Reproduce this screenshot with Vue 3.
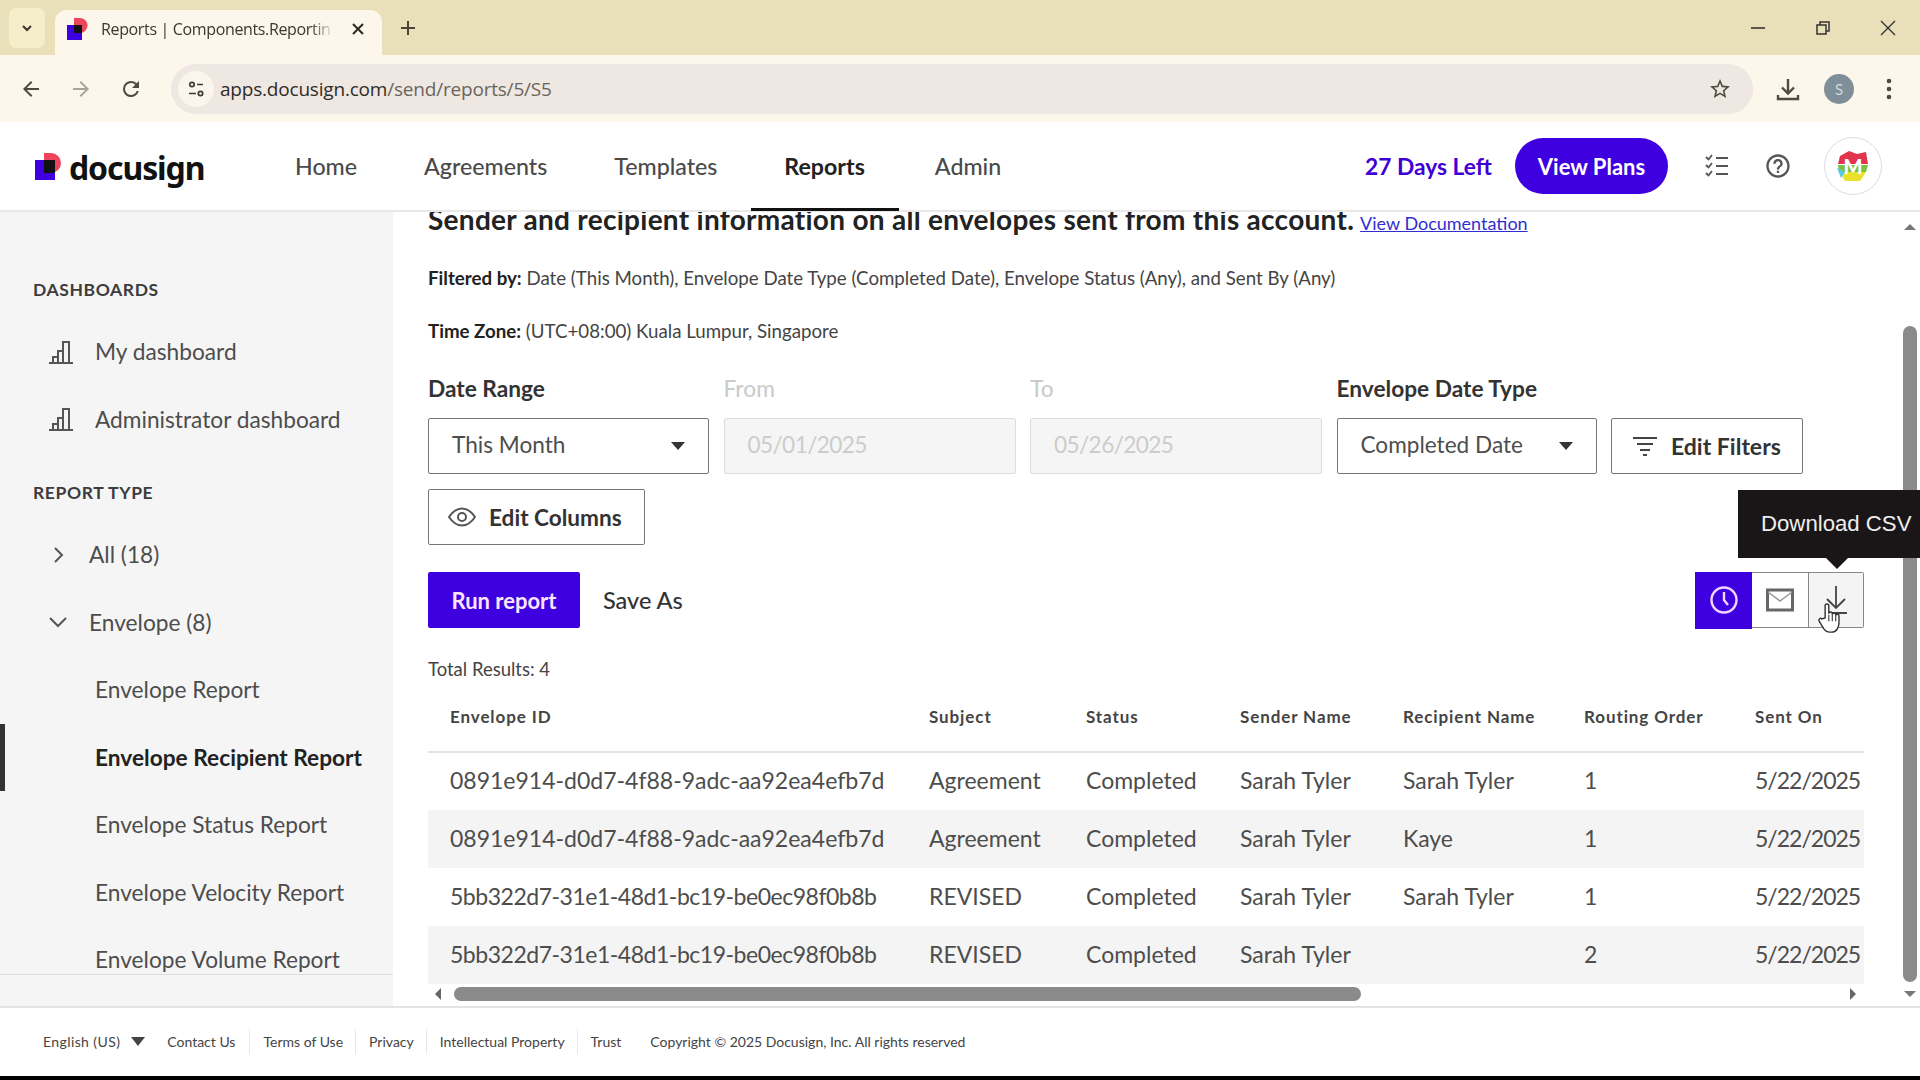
<script setup>
import { ref } from 'vue'

const navItems = ['Home', 'Agreements', 'Templates', 'Reports', 'Admin']
const activeNav = ref('Reports')

const envelopeReports = [
  'Envelope Report',
  'Envelope Recipient Report',
  'Envelope Status Report',
  'Envelope Velocity Report',
  'Envelope Volume Report'
]

const columns = ['Envelope ID', 'Subject', 'Status', 'Sender Name', 'Recipient Name', 'Routing Order', 'Sent On']

const rows = [
  ['0891e914-d0d7-4f88-9adc-aa92ea4efb7d', 'Agreement', 'Completed', 'Sarah Tyler', 'Sarah Tyler', '1', '5/22/2025'],
  ['0891e914-d0d7-4f88-9adc-aa92ea4efb7d', 'Agreement', 'Completed', 'Sarah Tyler', 'Kaye', '1', '5/22/2025'],
  ['5bb322d7-31e1-48d1-bc19-be0ec98f0b8b', 'REVISED', 'Completed', 'Sarah Tyler', 'Sarah Tyler', '1', '5/22/2025'],
  ['5bb322d7-31e1-48d1-bc19-be0ec98f0b8b', 'REVISED', 'Completed', 'Sarah Tyler', '', '2', '5/22/2025']
]

const footerLinks = ['Contact Us', 'Terms of Use', 'Privacy', 'Intellectual Property', 'Trust']
</script>

<template>
  <div class="screen">
    <div class="tabstrip">
      <div class="tab-search">
        <svg width="14" height="14" viewBox="0 0 14 14"><path d="M3 5l4 4 4-4" fill="none" stroke="#3a342a" stroke-width="2"/></svg>
      </div>
      <div class="tab">
        <svg class="favicon" width="22" height="24" viewBox="0 0 22 24">
          <path d="M8 1h6a7 7 0 0 1 0 15H8z" fill="#f0445c"/>
          <rect x="1" y="8" width="15" height="15" fill="#3f00e0"/>
          <path d="M8 8h8v8H8z" fill="#111"/>
        </svg>
        <span class="tab-title">Reports | Components.Reportin</span>
        <svg width="14" height="14" viewBox="0 0 14 14"><path d="M2 2l10 10M12 2L2 12" stroke="#2e2a22" stroke-width="2"/></svg>
      </div>
      <svg class="new-tab" width="18" height="18" viewBox="0 0 18 18"><path d="M9 2v14M2 9h14" stroke="#4a4436" stroke-width="2"/></svg>
      <div class="window-ctrls">
        <svg width="16" height="16" viewBox="0 0 16 16"><path d="M1 8h14" stroke="#333" stroke-width="1.6"/></svg>
        <svg width="16" height="16" viewBox="0 0 16 16"><path d="M2 5h9v9H2zM5 5V2h9v9h-3" fill="none" stroke="#333" stroke-width="1.5"/></svg>
        <svg width="16" height="16" viewBox="0 0 16 16"><path d="M1 1l14 14M15 1L1 15" stroke="#333" stroke-width="1.4"/></svg>
      </div>
    </div>

    <div class="toolbar">
      <svg width="24" height="24" viewBox="0 0 24 24"><path d="M20 11H7.8l5.6-5.6L12 4l-8 8 8 8 1.4-1.4L7.8 13H20z" fill="#4f4a40"/></svg>
      <svg class="fwd" width="24" height="24" viewBox="0 0 24 24"><path d="M4 11h12.2l-5.6-5.6L12 4l8 8-8 8-1.4-1.4 5.6-5.6H4z" fill="#a8a499"/></svg>
      <svg class="reload" width="24" height="24" viewBox="0 0 24 24"><path d="M17.65 6.35A7.96 7.96 0 0 0 12 4a8 8 0 1 0 7.73 10h-2.08A6 6 0 1 1 12 6c1.66 0 3.14.69 4.22 1.78L13 11h7V4z" fill="#4f4a40"/></svg>
      <div class="omnibox">
        <span class="site-info">
          <svg width="20" height="20" viewBox="0 0 20 20" fill="none" stroke="#3f3b33" stroke-width="1.7">
            <circle cx="6" cy="5.5" r="2.2"/><path d="M11 5.5h6M3 14.5h7"/><circle cx="14.5" cy="14.5" r="2.2"/>
          </svg>
        </span>
        <span class="url"><span class="url-host">apps.docusign.com</span>/send/reports/5/S5</span>
        <svg class="star" width="24" height="24" viewBox="0 0 24 24"><path d="M22 9.24l-7.19-.62L12 2 9.19 8.63 2 9.24l5.46 4.73L5.82 21 12 17.27 18.18 21l-1.63-7.03L22 9.24zM12 15.4l-3.76 2.27 1-4.28-3.32-2.88 4.38-.38L12 6.1l1.71 4.04 4.38.38-3.32 2.88 1 4.28L12 15.4z" fill="#4f4a40"/></svg>
      </div>
      <svg class="dl" width="26" height="26" viewBox="0 0 26 26" fill="none" stroke="#4f4a40" stroke-width="2.4"><path d="M13 3v14M7 11.5l6 6 6-6M3 19v4h20v-4"/></svg>
      <span class="profile">S</span>
      <svg class="dots" width="6" height="24" viewBox="0 0 6 24"><circle cx="3" cy="4" r="2.3" fill="#4f4a40"/><circle cx="3" cy="12" r="2.3" fill="#4f4a40"/><circle cx="3" cy="20" r="2.3" fill="#4f4a40"/></svg>
    </div>

    <header class="app-header">
      <div class="logo">
        <svg width="26" height="27" viewBox="0 0 26 27">
          <path d="M9 0h7a10 10 0 0 1 0 20H9z" fill="#f0445c"/>
          <rect x="0" y="7" width="20" height="20" fill="#3f00e0"/>
          <rect x="9" y="7" width="11" height="13" fill="#111"/>
        </svg>
        <span class="logo-text">docusign</span>
      </div>
      <nav class="nav">
        <a v-for="item in navItems" :key="item" class="nav-item" :class="{ active: item === activeNav }">{{ item }}</a>
      </nav>
      <div class="header-right">
        <span class="days-left">27 Days Left</span>
        <button class="btn-plans">View Plans</button>
        <svg class="hd-icon checklist" width="26" height="26" viewBox="0 0 26 26" fill="none" stroke="#555" stroke-width="1.8">
          <path d="M2 4l2.500 2.500L8 2M2 12l2.500 2.500L8 10M2 20l2.500 2.500L8 18M12 5h12M12 13h12M12 21h12"/>
        </svg>
        <svg class="hd-icon help" width="28" height="28" viewBox="0 0 24 24"><path d="M11 18h2v-2h-2v2zm1-16C6.480 2 2 6.480 2 12s4.480 10 10 10 10-4.480 10-10S17.520 2 12 2zm0 18c-4.410 0-8-3.590-8-8s3.590-8 8-8 8 3.590 8 8-3.590 8-8 8zm0-14c-2.210 0-4 1.790-4 4h2c0-1.100.9-2 2-2s2 .9 2 2c0 2-3 1.750-3 5h2c0-2.250 3-2.500 3-5 0-2.210-1.790-4-4-4z" fill="#555"/></svg>
        <div class="avatar">
          <svg width="36" height="36" viewBox="0 0 36 36">
            <path d="M5 8l9-5 8 3 9-2 2 12-30 0z" fill="#e0354c"/>
            <path d="M3 17h30l-2 7H4z" fill="#7bc043"/>
            <path d="M5 24h26l-6 9H10z" fill="#e8e22c"/>
            <path d="M2 20l8 4-4 6z" fill="#5cc8e8"/>
          </svg>
          <span class="avatar-m">M</span>
        </div>
      </div>
    </header>

    <div class="body">
      <aside class="sidebar">
        <div class="side-scroll">
          <h4 class="side-heading first">DASHBOARDS</h4>
          <div v-for="d in ['My dashboard', 'Administrator dashboard']" :key="d" class="side-item dash">
            <svg width="26" height="26" viewBox="0 0 26 26" fill="none" stroke="#555" stroke-width="2">
              <path d="M1 24h24M5 24v-6h5v6M10 24V12h5v12M15 24V3h6v21"/>
            </svg>
            <span>{{ d }}</span>
          </div>
          <h4 class="side-heading">REPORT TYPE</h4>
          <div class="side-item tree">
            <svg width="18" height="18" viewBox="0 0 18 18" fill="none" stroke="#555" stroke-width="2"><path d="M6 2l7 7-7 7"/></svg>
            <span>All (18)</span>
          </div>
          <div class="side-item tree">
            <svg width="18" height="18" viewBox="0 0 18 18" fill="none" stroke="#555" stroke-width="2"><path d="M1 5l8 8 8-8"/></svg>
            <span>Envelope (8)</span>
          </div>
          <div
            v-for="r in envelopeReports"
            :key="r"
            class="side-item sub"
            :class="{ current: r === 'Envelope Recipient Report' }"
          >{{ r }}</div>
        </div>
      </aside>

      <main class="main">
        <div class="content">
          <div class="title-line">
            <span class="report-title">Sender and recipient information on all envelopes sent from this account.</span>
            <a class="doc-link">View Documentation</a>
          </div>
          <p class="meta filtered"><b>Filtered by:</b> Date (This Month), Envelope Date Type (Completed Date), Envelope Status (Any), and Sent By (Any)</p>
          <p class="meta zone"><b>Time Zone:</b> (UTC+08:00) Kuala Lumpur, Singapore</p>

          <div class="filters">
            <div class="field range">
              <label>Date Range</label>
              <div class="input select"><span>This Month</span><i class="caret"></i></div>
            </div>
            <div class="field date">
              <label class="off">From</label>
              <div class="input disabled">05/01/2025</div>
            </div>
            <div class="field date">
              <label class="off">To</label>
              <div class="input disabled">05/26/2025</div>
            </div>
            <div class="field type">
              <label>Envelope Date Type</label>
              <div class="input select"><span>Completed Date</span><i class="caret"></i></div>
            </div>
            <button class="btn-outline filters-btn">
              <svg width="26" height="22" viewBox="0 0 26 22" fill="none" stroke="#444" stroke-width="2"><path d="M1 3h24M5 9h16M8 15h10M11 20h4"/></svg>
              Edit Filters
            </button>
            <button class="btn-outline columns-btn">
              <svg width="28" height="20" viewBox="0 0 28 20" fill="none" stroke="#555" stroke-width="2"><path d="M1 10C5 4 9 1.500 14 1.500S23 4 27 10c-4 6-8 8.500-13 8.500S5 16 1 10z"/><circle cx="14" cy="10" r="4"/></svg>
              Edit Columns
            </button>
          </div>

          <div class="actions">
            <button class="btn-run">Run report</button>
            <a class="save-as">Save As</a>
            <div class="icon-group">
              <button class="icon-btn clock">
                <svg width="30" height="30" viewBox="0 0 30 30" fill="none" stroke="#f4d4ff" stroke-width="2.4"><circle cx="15" cy="15" r="12.500"/><path d="M15 7v8l4 5"/></svg>
              </button>
              <button class="icon-btn mail">
                <svg width="28" height="24" viewBox="0 0 28 24" fill="none" stroke="#666" stroke-width="3"><rect x="1.500" y="2" width="25" height="20"/><path d="M2 4l12 9 12-9" stroke="#999" stroke-width="1.500"/></svg>
              </button>
              <button class="icon-btn hovered">
                <svg width="26" height="30" viewBox="0 0 26 30" fill="none" stroke="#444" stroke-width="1.800"><path d="M13 1v22M4 14l9 9 9-9M2 28h22"/></svg>
                <div class="tooltip">Download CSV</div>
                <svg class="hand" width="26" height="36" viewBox="0 0 24 30">
                  <path d="M7.500 15V3.800a1.700 1.700 0 0 1 3.400 0V11a1.600 1.600 0 0 1 3.200 0v1a1.600 1.600 0 0 1 3.200 0v1a1.500 1.500 0 0 1 3 0v6c0 5-2.500 9-6.500 9h-2c-2.500 0-4-1-5.500-3L2 18c-1-1.500 1-3.500 2.400-2.200z" fill="#fff" stroke="#333" stroke-width="1.300"/>
                  <path d="M10.900 12v6M14.100 12v6M17.300 13v5" stroke="#333" stroke-width="1"/>
                </svg>
              </button>
            </div>
          </div>

          <p class="total">Total Results: 4</p>

          <table class="results">
            <thead>
              <tr><th v-for="c in columns" :key="c">{{ c }}</th></tr>
            </thead>
            <tbody>
              <tr v-for="(row, i) in rows" :key="i">
                <td v-for="(cell, j) in row" :key="j">{{ cell }}</td>
              </tr>
            </tbody>
          </table>

          <div class="hscroll">
            <i class="arrow left"></i>
            <div class="hthumb"></div>
            <i class="arrow right"></i>
          </div>
        </div>

        <div class="vscroll">
          <i class="arrow up"></i>
          <div class="vthumb"></div>
          <i class="arrow down"></i>
        </div>
      </main>
    </div>

    <footer class="footer">
      <span class="lang">English (US) <i class="lang-caret"></i></span>
      <a v-for="l in footerLinks" :key="l" class="foot-link">{{ l }}</a>
      <span class="copyright">Copyright © 2025 Docusign, Inc. All rights reserved</span>
    </footer>
    <div class="black-edge"></div>
  </div>
</template>

<style>
html, body {
  margin: 0;
  background: #fff;
}
</style>

<style scoped>
.screen {
  width: 1920px;
  height: 1080px;
  overflow: hidden;
  display: flex;
  flex-direction: column;
  font-family: Lato, "Liberation Sans", sans-serif;
  color: #333;
}

/* browser chrome */
.tabstrip {
  height: 55px;
  flex-shrink: 0;
  background: #e9e0ba;
  display: flex;
  align-items: flex-end;
  box-sizing: border-box;
  position: relative;
}
.tab-search {
  width: 36px;
  height: 40px;
  margin: 0 8px 7px 9px;
  background: #f5eecb;
  border-radius: 8px;
  display: flex;
  align-items: center;
  justify-content: center;
}
.tab {
  width: 327px;
  height: 45px;
  margin-left: 2px;
  background: #fdf6ea;
  border-radius: 12px 12px 0 0;
  display: flex;
  align-items: center;
  padding: 0 16px 8px 11px;
  box-sizing: border-box;
}
.favicon { margin-right: 13px; flex-shrink: 0; }
.tab-title {
  width: 233px;
  margin-right: 17px;
  font-size: 16px;
  color: #3b372e;
  white-space: nowrap;
  overflow: hidden;
  font-family: "Open Sans", sans-serif;
  letter-spacing: -0.35px;
  -webkit-mask-image: linear-gradient(to right, #000 90%, transparent);
  mask-image: linear-gradient(to right, #000 90%, transparent);
}
.new-tab { margin: 0 0 18px 17px; }
.window-ctrls {
  margin-left: auto;
  display: flex;
  gap: 49px;
  align-items: center;
  height: 55px;
  padding-right: 24px;
}

.toolbar {
  height: 67px;
  flex-shrink: 0;
  background: #fdf6ea;
  display: flex;
  align-items: center;
  padding-left: 19px;
  box-sizing: border-box;
}
.fwd { margin-left: 26px; }
.reload { margin-left: 26px; }
.omnibox {
  margin-left: 28px;
  width: 1582px;
  height: 50px;
  border-radius: 25px;
  background: #efe7e2;
  display: flex;
  align-items: center;
  padding-left: 7px;
  box-sizing: border-box;
}
.site-info {
  width: 36px;
  height: 36px;
  border-radius: 50%;
  background: #fbf5ee;
  display: flex;
  align-items: center;
  justify-content: center;
}
.url {
  margin-left: 6px;
  font-size: 19px;
  color: #6a655c;
  font-family: "Open Sans", sans-serif;
  letter-spacing: -0.2px;
}
.url-host { color: #2f2c26; }
.star { margin-left: auto; margin-right: 21px; }
.dl { margin-left: 22px; }
.profile {
  margin-left: 23px;
  width: 30px;
  height: 30px;
  border-radius: 50%;
  background: #7f8f99;
  color: #cfd8dc;
  font-size: 15px;
  display: flex;
  align-items: center;
  justify-content: center;
}
.dots { margin-left: 32px; }

/* app header */
.app-header {
  height: 90px;
  flex-shrink: 0;
  box-sizing: border-box;
  background: #fff;
  border-bottom: 2px solid #e8e8e8;
  display: flex;
  align-items: stretch;
  padding-left: 35px;
}
.logo {
  width: 260px;
  display: flex;
  align-items: center;
  gap: 8px;
}
.logo-text {
  font-size: 32px;
  font-weight: 700;
  color: #111;
  letter-spacing: -1.1px;
  font-family: "Noto Sans", sans-serif;
  padding-top: 2px;
}
.nav {
  display: flex;
  align-items: stretch;
}
.nav-item {
  position: relative;
  display: flex;
  align-items: center;
  font-size: 23.2px;
  font-weight: 500;
  color: #4a4a4a;
  margin-right: 67px;
  white-space: nowrap;
}
.nav-item.active {
  color: #222;
  font-weight: 700;
  margin-right: 70px;
}
.nav-item.active::after {
  content: '';
  position: absolute;
  left: -33px;
  right: -34px;
  bottom: -1px;
  height: 3px;
  background: #111;
}
.header-right {
  margin-left: auto;
  display: flex;
  align-items: center;
  padding-right: 38px;
}
.days-left {
  font-size: 22.8px;
  font-weight: 700;
  color: #3f00d6;
}
.btn-plans {
  margin-left: 23px;
  width: 153px;
  height: 56px;
  border: none;
  border-radius: 28px;
  background: #3f00e0;
  color: #fff;
  font: 700 22px Lato, sans-serif;
}
.checklist { margin-left: 36px; }
.help { margin-left: 34px; }
.avatar {
  margin-left: 32px;
  width: 58px;
  height: 58px;
  border-radius: 50%;
  border: 1px solid #ddd;
  box-sizing: border-box;
  display: flex;
  align-items: center;
  justify-content: center;
  position: relative;
}
.avatar-m {
  position: absolute;
  color: #fff;
  font-weight: 900;
  font-size: 20px;
}

/* layout */
.body {
  flex: 1;
  display: flex;
  min-height: 0;
}

.sidebar {
  width: 393px;
  flex-shrink: 0;
  background: #f6f5f6;
}
.side-scroll {
  height: 763px;
  overflow: hidden;
  border-bottom: 1px solid #ddd;
  padding-top: 66px;
  box-sizing: border-box;
}
.side-heading {
  margin: 28px 0 16px 33px;
  font-size: 17.5px;
  line-height: 24px;
  font-weight: 700;
  color: #3c3c3c;
  letter-spacing: 0.6px;
}
.side-heading.first { margin-top: 0; margin-bottom: 16px; }
.side-item {
  height: 67.5px;
  display: flex;
  align-items: center;
  font-size: 22.7px;
  color: #4d4d4d;
  white-space: nowrap;
}
.dash { padding-left: 48px; gap: 21px; }
.tree { padding-left: 49px; gap: 22px; }
.sub { padding-left: 95px; position: relative; }
.sub.current { font-weight: 700; color: #222; }
.sub.current::before {
  content: '';
  position: absolute;
  left: 0;
  top: 0;
  bottom: 0;
  width: 5px;
  background: #333;
}

.main {
  flex: 1;
  display: flex;
  min-width: 0;
  overflow: hidden;
}
.content {
  width: 1471px;
  margin-left: 35px;
  flex-shrink: 0;
}

.title-line {
  margin-top: -8px;
  height: 30px;
  display: flex;
  align-items: center;
  white-space: nowrap;
}
.report-title {
  font-size: 28px;
  font-weight: 700;
  color: #222;
  letter-spacing: 0.28px;
}
.doc-link {
  margin-left: 6px;
  font-size: 18px;
  color: #2f2fd0;
  text-decoration: underline;
  padding-top: 7px;
}
.meta {
  margin: 0;
  font-size: 18.7px;
  line-height: 24px;
  color: #444;
  white-space: nowrap;
}
.meta b { color: #222; }
.filtered { margin-top: 32px; }
.zone { margin-top: 29px; }

.filters {
  margin-top: 32px;
  display: flex;
  flex-wrap: wrap;
  align-items: flex-end;
  column-gap: 14.5px;
  row-gap: 15px;
  width: 1400px;
}
.field label {
  display: block;
  font-size: 22.7px;
  line-height: 26px;
  font-weight: 700;
  color: #333;
  padding-top: 1px;
  margin-bottom: 16px;
}
.field label.off { color: #ccc; font-weight: 500; }
.range { width: 281px; }
.date { width: 292px; }
.type { width: 260px; }
.input {
  height: 56px;
  box-sizing: border-box;
  border: 1.500px solid #777;
  border-radius: 2px;
  display: flex;
  align-items: center;
  justify-content: space-between;
  padding: 0 23px 3px;
  font-size: 22.6px;
  color: #4d4d4d;
}
.input.disabled {
  border-color: #ddd;
  background: #f5f5f5;
  color: #ccc;
  justify-content: flex-start;
  letter-spacing: -0.6px;
}
.caret {
  width: 0;
  height: 0;
  margin-top: 3px;
  border-left: 7px solid transparent;
  border-right: 7px solid transparent;
  border-top: 8px solid #333;
}
.btn-outline {
  height: 56px;
  padding: 0 21px;
  box-sizing: border-box;
  border: 1.500px solid #777;
  border-radius: 2px;
  background: #fff;
  display: flex;
  align-items: center;
  gap: 13px;
  font: 700 22.6px Lato, sans-serif;
  color: #333;
  white-space: nowrap;
}
.columns-btn { width: 217px; padding: 0 18px 0 19px; }
.filters-btn { width: 192px; padding: 0 20px; font-size: 23px; }

.actions {
  margin-top: 27px;
  width: 1436px;
  display: flex;
  align-items: center;
}
.btn-run {
  width: 152px;
  height: 56px;
  border: none;
  border-radius: 2px;
  background: #3f00e0;
  color: #fbe4ff;
  font: 700 22px Lato, sans-serif;
}
.save-as {
  margin-left: 23px;
  font-size: 23.5px;
  font-weight: 500;
  color: #333;
}
.icon-group {
  margin-left: auto;
  display: flex;
  height: 56px;
  border: 1.500px solid #888;
  border-left: none;
  border-radius: 2px;
  box-sizing: border-box;
}
.icon-btn {
  width: 56px;
  padding: 0;
  border: none;
  background: #fff;
  display: flex;
  align-items: center;
  justify-content: center;
  position: relative;
}
.icon-btn.clock { width: 57px; background: #3f00e0; margin: -1.500px 0; }
.icon-btn.hovered { width: 55px; background: #f4f4f4; border-left: 1.500px solid #888; }
.tooltip {
  position: absolute;
  left: -71px;
  top: -83px;
  width: 183px;
  height: 68px;
  box-sizing: border-box;
  padding-left: 23px;
  background: #1a1618;
  color: #eee;
  font-size: 22.2px;
  line-height: 68px;
  text-align: left;
  white-space: nowrap;
  z-index: 5;
}
.tooltip::after {
  content: '';
  position: absolute;
  left: 88px;
  bottom: -11px;
  border-left: 11px solid transparent;
  border-right: 11px solid transparent;
  border-top: 11px solid #1a1618;
}
.hand {
  position: absolute;
  left: 8px;
  top: 27px;
}

.total {
  margin: 29px 0 0;
  font-size: 18.5px;
  line-height: 24px;
  color: #444;
}

.results {
  width: 1436px;
  border-collapse: collapse;
  table-layout: fixed;
}
.results th {
  height: 71px;
  box-sizing: border-box;
  padding: 0 0 0 22px;
  text-align: left;
  font-size: 17px;
  font-weight: 700;
  color: #444;
  letter-spacing: 0.9px;
  border-bottom: 2px solid #e4e4e4;
  white-space: nowrap;
}
.results th:nth-child(1) { width: 479px; }
.results th:nth-child(2) { width: 157px; }
.results th:nth-child(3) { width: 154px; }
.results th:nth-child(4) { width: 163px; }
.results th:nth-child(5) { width: 181px; }
.results th:nth-child(6) { width: 171px; }
.results td {
  height: 58px;
  padding: 0 0 3px 22px;
  box-sizing: border-box;
  font-size: 23px;
  color: #4d4d4d;
  white-space: nowrap;
  overflow: hidden;
}
.results td:last-child { letter-spacing: -1px; }
.results tbody tr:nth-child(n+3) td:first-child { letter-spacing: -0.48px; }
.results tbody tr:nth-child(even) { background: #f4f4f4; }

.hscroll {
  margin-top: 3px;
  width: 1436px;
  height: 14px;
  display: flex;
  align-items: center;
}
.hthumb {
  margin-left: 13px;
  width: 907px;
  height: 14px;
  border-radius: 7px;
  background: #8a8a8a;
}
.arrow { width: 0; height: 0; display: block; }
.arrow.left {
  margin-left: 7px;
  border-top: 6px solid transparent;
  border-bottom: 6px solid transparent;
  border-right: 6px solid #666;
}
.arrow.right {
  margin-left: auto;
  margin-right: 8px;
  border-top: 6px solid transparent;
  border-bottom: 6px solid transparent;
  border-left: 6px solid #666;
}

.vscroll {
  width: 21px;
  display: flex;
  flex-direction: column;
  align-items: center;
}
.vthumb {
  margin-top: 96px;
  width: 14px;
  height: 656px;
  border-radius: 7px;
  background: #8a8a8a;
}
.arrow.up {
  margin-top: 12px;
  border-left: 6px solid transparent;
  border-right: 6px solid transparent;
  border-bottom: 6px solid #777;
}
.arrow.down {
  margin-top: 9px;
  border-left: 6px solid transparent;
  border-right: 6px solid transparent;
  border-top: 6px solid #777;
}

/* footer */
.footer {
  height: 70px;
  flex-shrink: 0;
  box-sizing: border-box;
  background: #fff;
  border-top: 2px solid #e4e4e4;
  display: flex;
  align-items: center;
  padding: 0 0 2px 43px;
  font-size: 14px;
  color: #444;
}
.lang {
  display: flex;
  align-items: center;
  gap: 11px;
  margin-right: 9px;
  letter-spacing: 0.4px;
}
.lang-caret {
  width: 0;
  height: 0;
  border-left: 7px solid transparent;
  border-right: 7px solid transparent;
  border-top: 9px solid #444;
}
.foot-link {
  padding: 4px 12px 4px 13px;
  border-right: 1px solid #e8e8e8;
}
.foot-link:first-of-type { padding-right: 14px; }
.foot-link:last-of-type { border-right: none; }
.copyright { margin-left: 17px; }

.black-edge {
  height: 4px;
  flex-shrink: 0;
  background: #000;
}
</style>
